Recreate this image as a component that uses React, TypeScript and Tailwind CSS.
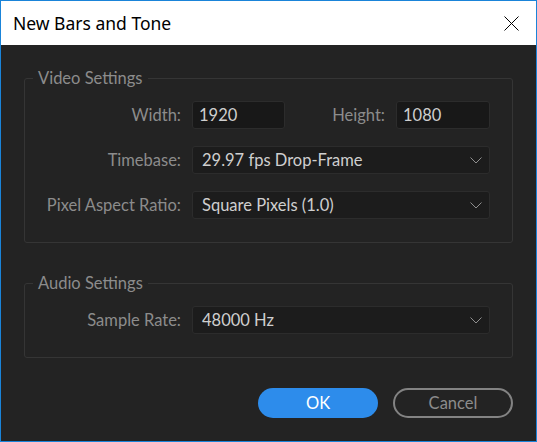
import { ReactNode } from "react";

function Chevron() {
  return (
    <svg width="12" height="7" viewBox="0 0 12 7" className="shrink-0">
      <path d="M0.5 0.5 L6 6 L11.5 0.5" fill="none" stroke="#8f8f8f" strokeWidth="1" />
    </svg>
  );
}

function Select({ value }: { value: string }) {
  return (
    <div className="flex h-[28px] items-center justify-between rounded-[3px] border border-[#2c2c2c] bg-[#1c1c1c] pl-[9px] pr-[7px] text-[16.5px] text-[#cfcfcf]">
      <span>{value}</span>
      <Chevron />
    </div>
  );
}

function Field({ value, className }: { value: string; className?: string }) {
  return (
    <div
      className={
        "flex h-[28px] items-center rounded-[3px] border border-[#2c2c2c] bg-[#181818] pl-[6px] text-[16.5px] text-[#cfcfcf] " +
        (className || "")
      }
    >
      {value}
    </div>
  );
}

function Label({ children }: { children: ReactNode }) {
  return <div className="text-right text-[16.5px] text-[#8c8c8c]">{children}</div>;
}

function Group({ title, children }: { title: string; children: ReactNode }) {
  return (
    <fieldset className="rounded-[3px] border border-[#353535] px-0 pb-[23px] pt-[14px]">
      <legend className="ml-[8px] px-[5px] text-[16.5px] leading-[18px] text-[#8c8c8c]">{title}</legend>
      <div className="grid grid-cols-[156px_1fr] items-center gap-x-[11px] gap-y-[17px] pr-[22px]">
        {children}
      </div>
    </fieldset>
  );
}

export default function App() {
  return (
    <div
      className="flex h-[442px] w-[537px] flex-col border border-[#1a84d9] bg-[#232323]"
      style={{ fontFamily: "Lato, 'Noto Sans', sans-serif" }}
    >
      <div className="flex h-[44px] shrink-0 items-center justify-between bg-white pl-[12px] pr-[17px]">
        <span className="text-[17.5px] text-black" style={{ fontFamily: "'Noto Sans', sans-serif" }}>
          New Bars and Tone
        </span>
        <svg width="15" height="15" viewBox="0 0 15 15">
          <path d="M0.5 0.5 L14.5 14.5 M14.5 0.5 L0.5 14.5" stroke="#000" strokeWidth="1" />
        </svg>
      </div>

      <div className="flex flex-col px-[23px] pt-[24px]">
        <Group title="Video Settings">
          <Label>Width:</Label>
          <div className="flex items-center">
            <Field value="1920" className="w-[93px]" />
            <div className="flex-1 pr-[11px] text-right text-[16.5px] text-[#8c8c8c]">Height:</div>
            <Field value="1080" className="w-[94px]" />
          </div>
          <Label>Timebase:</Label>
          <Select value="29.97 fps Drop-Frame" />
          <Label>Pixel Aspect Ratio:</Label>
          <Select value="Square Pixels (1.0)" />
        </Group>

        <div className="h-[31px]" />

        <Group title="Audio Settings">
          <Label>Sample Rate:</Label>
          <Select value="48000 Hz" />
        </Group>

        <div className="mt-[30px] flex justify-end gap-[15px]">
          <button className="h-[30px] w-[120px] rounded-full bg-[#2d8ceb] text-[16.5px] text-white">OK</button>
          <button className="h-[30px] w-[120px] rounded-full border-2 border-[#838383] text-[16.5px] text-[#8c8c8c]">
            Cancel
          </button>
        </div>
      </div>
    </div>
  );
}
